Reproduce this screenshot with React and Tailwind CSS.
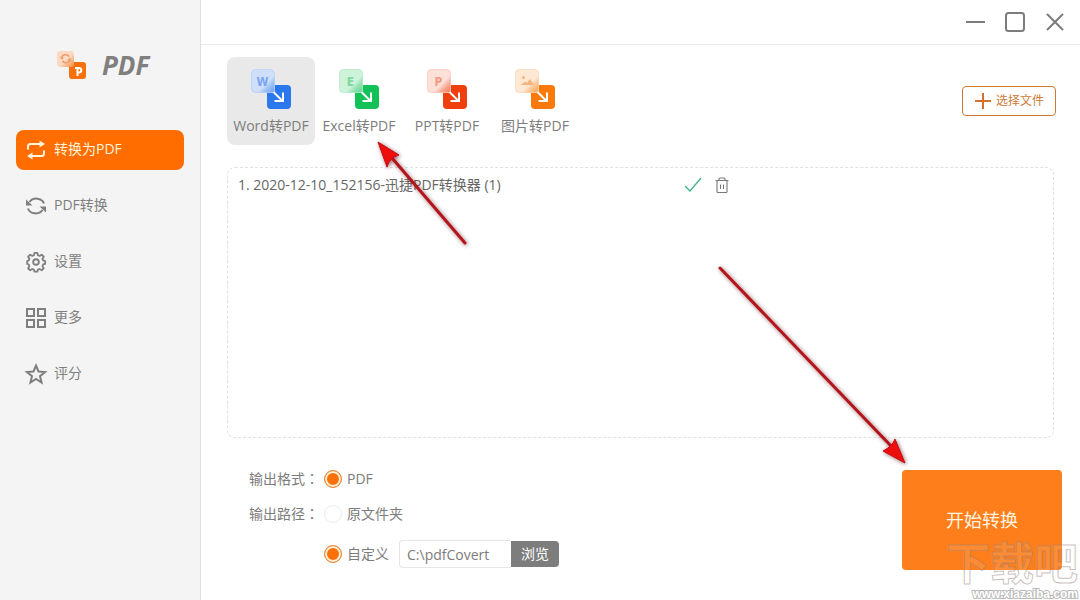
import React from 'react';

const ICON = 'size-6 shrink-0';

function RepeatIcon() {
  return (
    <svg viewBox="0 0 24 24" className={ICON} fill="none" stroke="currentColor" strokeWidth="2" aria-hidden="true">
      <path d="M4 11.500V8.500A2.500 2.500 0 0 1 6.500 6H17" />
      <path d="M20 12.500v3a2.500 2.500 0 0 1-2.500 2.500H7" />
      <path d="M15.500 2.500 21 6l-5.500 3.500zM8.500 14.500 3 18l5.500 3.500z" fill="currentColor" stroke="none" />
    </svg>
  );
}

function SyncIcon() {
  return (
    <svg viewBox="0 0 24 24" className={ICON} fill="none" stroke="currentColor" strokeWidth="2" aria-hidden="true">
      <path d="M20 9.500A8 7 0 0 0 5.500 8" />
      <path d="M4 14.500A8 7 0 0 0 18.500 16" />
      <path d="M2 5.500v6h6.500zM22 18.500v-6h-6.500z" fill="currentColor" stroke="none" />
    </svg>
  );
}

function GearIcon() {
  return (
    <svg viewBox="0 0 24 24" className={ICON} fill="none" stroke="currentColor" strokeWidth="1.9" strokeLinejoin="round" aria-hidden="true">
      <path d="M10.500 3h3l.6 2.500 1.700.7 2.200-1.300 2.100 2.100-1.300 2.200.7 1.700 2.100.6v3l-2.100.6-.7 1.700 1.300 2.200-2.100 2.100-2.200-1.300-1.700.7-.6 2.100h-3l-.6-2.100-1.700-.7L6 21.100 3.900 19l1.300-2.200-.7-1.700L2.900 14.500v-3l1.600-.6.7-1.700L3.900 7 6 4.900l2.200 1.300 1.700-.7z" transform="translate(0.400 0) scale(0.960)" />
      <circle cx="12" cy="12" r="2.800" />
    </svg>
  );
}

function GridIcon() {
  return (
    <svg viewBox="0 0 24 24" className={ICON} fill="none" stroke="currentColor" strokeWidth="2" aria-hidden="true">
      <path d="M3 3h7v7H3zM14 3h7v7h-7zM3 14h7v7H3zM14 14h7v7h-7z" />
    </svg>
  );
}

function StarIcon() {
  return (
    <svg viewBox="0 0 24 24" className={ICON} fill="none" stroke="currentColor" strokeWidth="2" aria-hidden="true">
      <path d="m12 3.500 2.500 6 6.500.5-5 4.200 1.600 6.300-5.600-3.500-5.600 3.500L8 14.200 3 10l6.500-.5z" />
    </svg>
  );
}

const NAV = [
  { label: '转换为PDF', Icon: RepeatIcon, active: true },
  { label: 'PDF转换', Icon: SyncIcon },
  { label: '设置', Icon: GearIcon },
  { label: '更多', Icon: GridIcon },
  { label: '评分', Icon: StarIcon },
];

const FORMATS = [
  { id: 'word', label: 'Word转PDF', letter: 'W', color: '#2b77ee', pale: '#cfdffa', mark: '#7ba6ec', active: true },
  { id: 'excel', label: 'Excel转PDF', letter: 'E', color: '#12c157', pale: '#cdf3da', mark: '#7fd79d' },
  { id: 'ppt', label: 'PPT转PDF', letter: 'P', color: '#ee3f0c', pale: '#fde0d8', mark: '#f39a83' },
  { id: 'image', label: '图片转PDF', color: '#f9790b', pale: '#fde8d4', mark: '#f5b47c' },
];

function FormatIcon({ id, letter, color, pale, mark }) {
  return (
    <svg viewBox="0 0 40 40" className="size-10" aria-hidden="true">
      <defs>
        <linearGradient id={`fade-${id}`} x1="0" y1="0" x2="1" y2="1">
          <stop offset="0.62" stopColor={pale} />
          <stop offset="1" stopColor={color} stopOpacity="0.65" />
        </linearGradient>
      </defs>
      <rect x="16" y="16" width="24" height="24" rx="4" fill={color} />
      <path d="M0 4a4 4 0 0 1 4-4h16a4 4 0 0 1 4 4v20H4a4 4 0 0 1-4-4z" fill="#fff" />
      <path d="M.5 4A3.500 3.500 0 0 1 4 .5h16A3.500 3.500 0 0 1 23.500 4v19.500H4A3.500 3.500 0 0 1 .5 20z" fill={`url(#fade-${id})`} stroke={mark} strokeOpacity="0.35" />
      {letter ? (
        <text x="11.500" y="16.500" textAnchor="middle" fontSize="12" fontWeight="700" fontFamily="'DejaVu Sans Condensed', Roboto, sans-serif" fill={mark}>{letter}</text>
      ) : (
        <g fill={mark}>
          <circle cx="8.500" cy="8.500" r="1.500" />
          <path d="m6 16 4-3.500 2 1.500 3-4 4 6z" />
        </g>
      )}
      <path d="m22.500 23 9 9M32 23.500V32h-8.500" fill="none" stroke="#fff" strokeWidth="2" />
    </svg>
  );
}

function Logo() {
  return (
    <svg viewBox="0 0 29 29" className="size-[29px]" aria-hidden="true">
      <defs>
        <linearGradient id="logo-fade" x1="0" y1="0" x2="1" y2="1">
          <stop offset="0.55" stopColor="#fbd9c3" />
          <stop offset="1" stopColor="#fa8a3c" />
        </linearGradient>
      </defs>
      <rect x="12" y="11" width="17" height="17" rx="3" fill="#f8700b" />
      <rect x="0" y="0" width="17" height="16" rx="3" fill="url(#logo-fade)" />
      <path d="M4.500 7a4.200 4.200 0 0 1 7.500-1.500M13 8.500A4.200 4.200 0 0 1 5.500 10" fill="none" stroke="#ef9a63" strokeWidth="1.500" />
      <path d="M3 5.500 4.500 8.500 7 7zM14.500 10 13 7l-2.500 1.500z" fill="#ef9a63" />
      <path d="M18 17h2.500v8M20.500 17h1.500a2 2 0 0 1 0 4.500h-1.500" fill="none" stroke="#fff" strokeWidth="2" />
    </svg>
  );
}

const RADIO =
  'size-[18px] shrink-0 appearance-none rounded-full border border-[#e9e9e9] bg-white checked:border-[#e98a3a] checked:bg-[#fb7008] checked:shadow-[inset_0_0_0_2px_#fff0da]';

function Radio({ label, ...props }) {
  return (
    <label className="flex items-center gap-[5px]">
      <input type="radio" className={RADIO} {...props} />
      {label}
    </label>
  );
}

function RowLabel({ children }) {
  return <span className="w-[75px] font-['Open_Sans','Noto_Sans_CJK_TC',sans-serif]" lang="zh-Hant">{children}</span>;
}

function PointerArrows() {
  return (
    <svg viewBox="0 0 1080 600" className="pointer-events-none absolute top-0 left-0 h-[600px] w-[1080px]" aria-hidden="true">
      <g className="drop-shadow-[1px_1px_2px_rgba(80,0,0,0.6)]">
        <path d="M465 243 392 158M720 268l172 179" stroke="#b4141b" strokeWidth="3" strokeLinecap="round" />
        <path d="m378 142 21 13-5 2-5 5-2 5zM905 463l-22-12 5-3 5-5 2-4z" fill="#ee0d0d" stroke="#c01018" />
      </g>
    </svg>
  );
}

export default function App() {
  return (
    <div className="relative flex min-h-screen overflow-hidden bg-white font-['Open_Sans','Noto_Sans_CJK_SC',sans-serif] text-sm leading-5 text-[#7c7c7c]">
      <aside className="w-[201px] shrink-0 border-r border-[#dedede] bg-[#f4f4f4] px-4 pt-[50px]">
        <div className="flex h-[30px] items-center gap-4 pl-[41px]">
          <Logo />
          <span className="text-[26px] leading-[30px] font-bold text-[#7f7f7f] italic">PDF</span>
        </div>
        <nav className="mt-[50px] flex flex-col gap-4">
          {NAV.map(({ label, Icon, active }) => (
            <a
              key={label}
              href="#"
              aria-current={active ? 'page' : undefined}
              className={`flex h-10 items-center gap-[6px] rounded-lg pl-2 ${active ? 'bg-[#ff6d00] text-[#fff3dc]' : 'text-[#7f7f7f]'}`}
            >
              <Icon />
              <span className="pb-[2px]">{label}</span>
            </a>
          ))}
        </nav>
      </aside>

      <main className="flex min-w-0 flex-1 flex-col">
        <header className="flex h-[45px] items-center justify-end gap-4 border-b border-[#e9e9e9] pr-[13px] text-[#7c7c7c]">
          <button type="button" aria-label="最小化">
            <svg viewBox="0 0 24 24" className="size-6" fill="none" stroke="currentColor" strokeWidth="2"><path d="M3 12h19" /></svg>
          </button>
          <button type="button" aria-label="最大化">
            <svg viewBox="0 0 24 24" className="size-6" fill="none" stroke="currentColor" strokeWidth="2"><rect x="3" y="3" width="18" height="18" rx="2.500" /></svg>
          </button>
          <button type="button" aria-label="关闭">
            <svg viewBox="0 0 24 24" className="size-6" fill="none" stroke="currentColor" strokeWidth="2"><path d="m4 4 16 16M20 4 4 20" /></svg>
          </button>
        </header>

        <div className="flex items-center justify-between pt-3 pr-6 pl-[26px]">
          <div className="flex">
            {FORMATS.map((format) => (
              <button
                key={format.id}
                type="button"
                aria-pressed={Boolean(format.active)}
                className={`flex size-[88px] flex-col items-center gap-[7px] rounded-lg pt-3 whitespace-nowrap ${format.active ? 'bg-[#e9e9e9]' : ''}`}
              >
                <FormatIcon {...format} />
                <span>{format.label}</span>
              </button>
            ))}
          </div>
          <button type="button" className="flex h-[30px] items-center gap-1 rounded border border-[#cf7a30] px-[11px] text-xs text-[#cf7a38]">
            <svg viewBox="0 0 18 18" className="size-[18px]" fill="none" stroke="#d4712a" strokeWidth="2" aria-hidden="true"><path d="M9 1v16M1 9h16" /></svg>
            选择文件
          </button>
        </div>

        <section className="mx-[26px] mt-[22px] flex-1 rounded-lg border border-dashed border-[#e0e0e0] px-[10px] py-[7px]">
          <div className="flex items-center text-[#666]">
            <span className="w-[446px] whitespace-nowrap">1. 2020-12-10_152156-迅捷PDF转换器 (1)</span>
            <svg viewBox="0 0 18 18" className="size-[18px]" fill="none" stroke="#3fb583" strokeWidth="1.300" role="img" aria-label="完成"><path d="m1 10 5 5L17 2" /></svg>
            <button type="button" aria-label="删除" className="ml-3">
              <svg viewBox="0 0 16 18" className="h-[18px] w-4" fill="none" stroke="#777" strokeWidth="1.100">
                <path d="M1.500 4.500h13M3 4.500v11a1 1 0 0 0 1 1h8a1 1 0 0 0 1-1v-11M5 4.500V3a1 1 0 0 1 1-1h4a1 1 0 0 1 1 1v1.500M6.500 8.500V13M9.500 8.500V13" />
              </svg>
            </button>
          </div>
        </section>

        <footer className="flex items-start justify-between pt-8 pr-[18px] pb-[30px] pl-12">
          <form className="flex flex-col" onSubmit={(event) => event.preventDefault()}>
            <div className="flex h-[18px] items-center">
              <RowLabel>输出格式：</RowLabel>
              <Radio label="PDF" name="format" defaultChecked />
            </div>
            <div className="mt-[17px] flex h-[18px] items-center">
              <RowLabel>输出路径：</RowLabel>
              <Radio label="原文件夹" name="folder" />
            </div>
            <div className="mt-[17px] flex h-7 items-center pl-[75px]">
              <Radio label="自定义" name="folder" defaultChecked />
              <input
                type="text"
                aria-label="输出文件夹"
                defaultValue="C:\pdfCovert"
                className="ml-[10px] h-7 w-28 rounded-l border border-r-0 border-[#e6e6e6] bg-white px-[7px]"
              />
              <button type="button" className="h-[26px] rounded-r bg-[#7d7d7d] px-[10px] text-white">浏览</button>
            </div>
          </form>
          <button type="button" className="h-[100px] w-40 rounded bg-[#ff7e1c] text-lg text-[#fff4e0]">开始转换</button>
        </footer>
      </main>

      <PointerArrows />
      <div className="pointer-events-none absolute right-0 bottom-0 flex flex-col items-end pr-[2px] font-bold" aria-hidden="true">
        <span className="text-[44px] leading-[50px] text-white/10 [-webkit-text-stroke:1px_rgba(150,130,120,0.5)]">下载吧</span>
        <span className="font-['Liberation_Sans',sans-serif] text-xs leading-3 text-white [-webkit-text-stroke:2px_rgba(170,170,170,0.8)] [paint-order:stroke_fill]">www.xiazaiba.com</span>
      </div>
    </div>
  );
}
